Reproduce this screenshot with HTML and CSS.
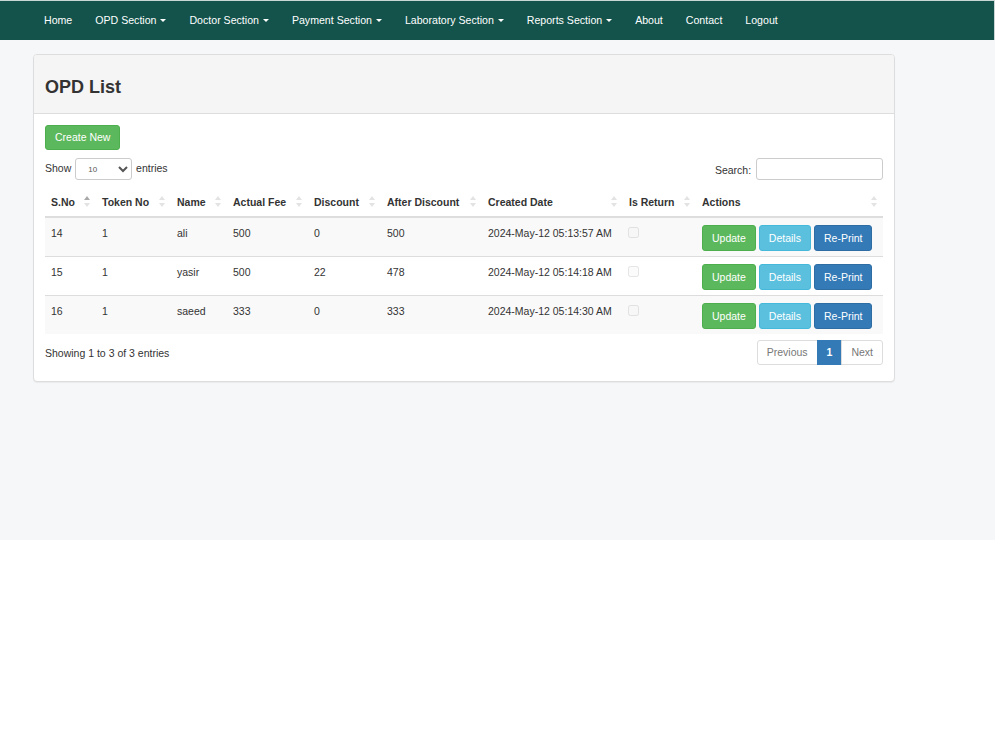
FILE: index.html
```html
<!DOCTYPE html>
<html lang="en">
<head>
<meta charset="UTF-8">
<title>OPD List</title>
<link rel="stylesheet" href="styles.css">
</head>
<body>

<div class="page">
  <nav class="navbar">
    <a href="#">Home</a>
    <a href="#">OPD Section <span class="caret"></span></a>
    <a href="#">Doctor Section <span class="caret"></span></a>
    <a href="#">Payment Section <span class="caret"></span></a>
    <a href="#">Laboratory Section <span class="caret"></span></a>
    <a href="#">Reports Section <span class="caret"></span></a>
    <a href="#">About</a>
    <a href="#">Contact</a>
    <a href="#">Logout</a>
  </nav>

  <div class="panel">
    <div class="panel-heading">OPD List</div>
    <div class="panel-body">
      <a class="btn btn-success" href="#">Create New</a>

      <div class="dt-top">
        <label class="dt-length">Show
          <select>
            <option>10</option>
            <option>25</option>
            <option>50</option>
          </select>
          entries</label>
        <label class="dt-search">Search: <input type="text"></label>
      </div>

      <table class="table">
        <thead>
          <tr>
            <th class="c1">S.No <span class="sort asc"></span></th>
            <th class="c2">Token No <span class="sort"></span></th>
            <th class="c3">Name <span class="sort"></span></th>
            <th class="c4">Actual Fee <span class="sort"></span></th>
            <th class="c5">Discount <span class="sort"></span></th>
            <th class="c6">After Discount <span class="sort"></span></th>
            <th class="c7">Created Date <span class="sort"></span></th>
            <th class="c8">Is Return <span class="sort"></span></th>
            <th class="c9">Actions <span class="sort"></span></th>
          </tr>
        </thead>
        <tbody>
          <tr>
            <td>14</td><td>1</td><td>ali</td><td>500</td><td>0</td><td>500</td>
            <td>2024-May-12 05:13:57 AM</td>
            <td><input type="checkbox" disabled></td>
            <td class="actions"><a class="btn btn-success" href="#">Update</a><a class="btn btn-info" href="#">Details</a><a class="btn btn-primary" href="#">Re-Print</a></td>
          </tr>
          <tr>
            <td>15</td><td>1</td><td>yasir</td><td>500</td><td>22</td><td>478</td>
            <td>2024-May-12 05:14:18 AM</td>
            <td><input type="checkbox" disabled></td>
            <td class="actions"><a class="btn btn-success" href="#">Update</a><a class="btn btn-info" href="#">Details</a><a class="btn btn-primary" href="#">Re-Print</a></td>
          </tr>
          <tr>
            <td>16</td><td>1</td><td>saeed</td><td>333</td><td>0</td><td>333</td>
            <td>2024-May-12 05:14:30 AM</td>
            <td><input type="checkbox" disabled></td>
            <td class="actions"><a class="btn btn-success" href="#">Update</a><a class="btn btn-info" href="#">Details</a><a class="btn btn-primary" href="#">Re-Print</a></td>
          </tr>
        </tbody>
      </table>

      <div class="dt-bottom">
        <div class="dt-info">Showing 1 to 3 of 3 entries</div>
        <ul class="pagination">
          <li class="disabled"><a href="#">Previous</a></li>
          <li class="active"><a href="#">1</a></li>
          <li class="disabled"><a href="#">Next</a></li>
        </ul>
      </div>
    </div>
  </div>
</div>

</body>
</html>
```

FILE: styles.css
```css
body {
  margin: 0;
  padding: 0;
  font-family: "Liberation Sans", Arial, sans-serif;
  font-size: 10.5px;
  color: #333;
  background-color: #fff;
}

a {
  text-decoration: none;
}

.page {
  width: 995px;
  min-height: 540px;
  background-color: #f6f7f9;
  box-sizing: border-box;
  padding-bottom: 20px;
}

.navbar {
  height: 40px;
  box-sizing: border-box;
  background-color: #13534b;
  border-top: 1px solid #c9d6d3;
  border-right: 1px solid #c9d6d3;
  display: flex;
  align-items: center;
  padding-left: 32.5px;
}

.navbar a {
  color: #fff;
  padding: 0 11.5px 2px 11.5px;
  font-size: 10.6px;
  line-height: 36px;
}

.caret {
  display: inline-block;
  width: 0;
  height: 0;
  margin-left: 1px;
  vertical-align: middle;
  border-top: 3px solid #fff;
  border-left: 3.5px solid transparent;
  border-right: 3.5px solid transparent;
}

.panel {
  width: 862px;
  margin: 14px 0 0 33px;
  background-color: #fff;
  border: 1px solid #ddd;
  border-radius: 4px;
  box-shadow: 0 1px 1px rgba(0, 0, 0, 0.05);
  box-sizing: border-box;
}

.panel-heading {
  background-color: #f5f5f5;
  border-bottom: 1px solid #ddd;
  border-radius: 3px 3px 0 0;
  height: 59px;
  box-sizing: border-box;
  padding: 6px 0 0 11px;
  font-size: 18px;
  font-weight: bold;
  line-height: 53px;
}

.panel-body {
  padding: 11px 11px 16px 11px;
}

.btn {
  display: inline-block;
  color: #fff;
  font-size: 10.5px;
  line-height: 15px;
  padding: 4px 9px;
  border: 1px solid transparent;
  border-radius: 3px;
}

.btn-success {
  background-color: #5cb85c;
  border-color: #4cae4c;
}

.btn-info {
  background-color: #5bc0de;
  border-color: #46b8da;
}

.btn-primary {
  background-color: #337ab7;
  border-color: #2e6da4;
}

.dt-top {
  display: flex;
  justify-content: space-between;
  align-items: center;
  margin-top: 8px;
  height: 22px;
}

.dt-length select {
  width: 57px;
  height: 22px;
  margin: 0 1px;
  font-size: 8px;
  font-family: "Liberation Sans", Arial, sans-serif;
  padding: 0 0 0 8px;
  border: 1px solid #ccc;
  border-radius: 3px;
  background-color: #fff;
  color: #555;
}

.dt-search input {
  width: 127px;
  height: 22px;
  box-sizing: border-box;
  margin-left: 2px;
  border: 1px solid #ccc;
  border-radius: 3px;
}

.table {
  width: 100%;
  border-collapse: collapse;
  margin-top: 9px;
  table-layout: fixed;
}

.table th {
  text-align: left;
  font-weight: bold;
  padding: 7px 6px 8px 6px;
  line-height: 12px;
  border-bottom: 2px solid #ddd;
  position: relative;
  white-space: nowrap;
}

.table td {
  padding: 9px 6px 0 6px;
  height: 29px;
  line-height: 12px;
  vertical-align: top;
  border-top: 1px solid #ddd;
  white-space: nowrap;
}

.table tbody tr:first-child td {
  border-top: 0;
}

.table tbody tr:nth-child(odd) {
  background-color: #f9f9f9;
}

.table td.actions {
  padding-top: 7px;
  padding-bottom: 5px;
  height: 26px;
}

.actions .btn {
  margin-right: 3px;
  padding: 5px 9px;
  line-height: 14px;
}

.actions .btn:last-child {
  margin-right: 0;
}

.table input[type="checkbox"] {
  margin: 0 0 0 -1px;
  width: 11px;
  height: 11px;
  opacity: 0.55;
}

.c1 { width: 39px; }
.c2 { width: 63px; }
.c3 { width: 44px; }
.c4 { width: 69px; }
.c5 { width: 61px; }
.c6 { width: 89px; }
.c7 { width: 129px; }
.c8 { width: 61px; }
.c9 { width: 175px; }

.sort {
  position: absolute;
  right: 6px;
  top: 7px;
  width: 6px;
  height: 11px;
}

.sort::before,
.sort::after {
  content: "";
  position: absolute;
  left: 0;
  width: 0;
  height: 0;
  border-left: 3px solid transparent;
  border-right: 3px solid transparent;
}

.sort::before {
  top: 0;
  border-bottom: 4px solid #e3e3e3;
}

.sort::after {
  bottom: 0;
  border-top: 4px solid #e3e3e3;
}

.sort.asc::before {
  border-bottom-color: #a9a9a9;
}

.dt-bottom {
  display: flex;
  justify-content: space-between;
  align-items: center;
  margin-top: 6px;
}

.pagination {
  list-style: none;
  margin: 0;
  padding: 0;
  display: flex;
}

.pagination a {
  display: block;
  padding: 5px 9px;
  line-height: 13px;
  border: 1px solid #ddd;
  margin-left: -1px;
  color: #777;
  background-color: #fff;
}

.pagination li:first-child a {
  border-radius: 3px 0 0 3px;
}

.pagination li:last-child a {
  border-radius: 0 3px 3px 0;
}

.pagination .active a {
  background-color: #337ab7;
  border-color: #337ab7;
  color: #fff;
  font-weight: bold;
}
```
